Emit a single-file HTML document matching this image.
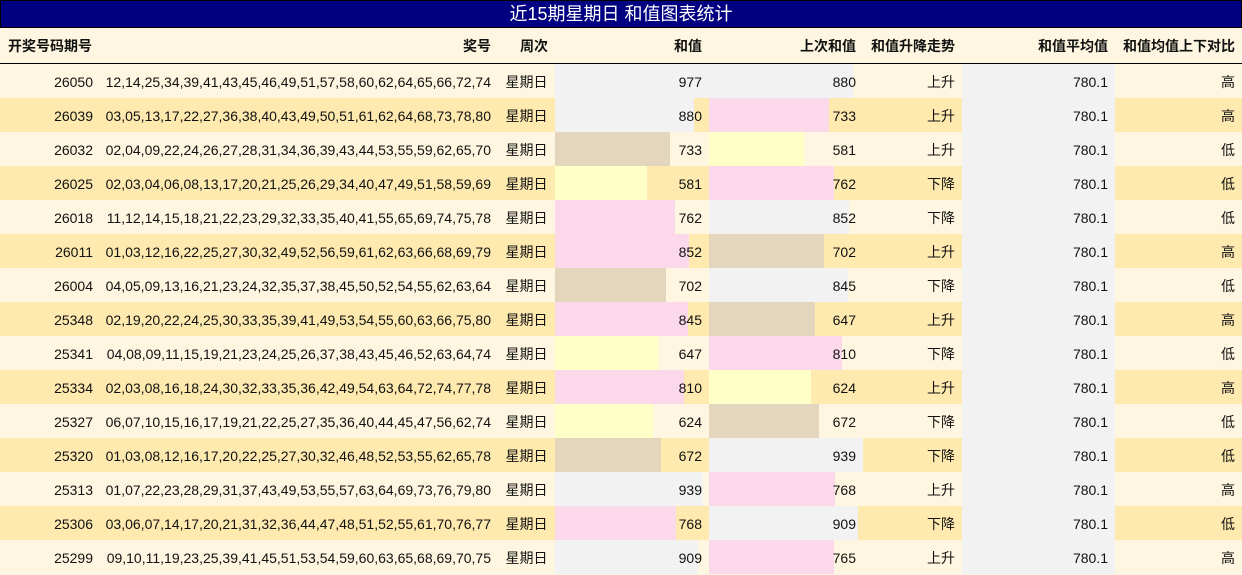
<!DOCTYPE html><html><head><meta charset="utf-8"><style>
body{margin:0;width:1242px;height:575px;overflow:hidden;background:#fef6e0;font-family:"Liberation Sans","Noto Sans CJK SC",sans-serif;font-size:14px;color:#111}
.t{background:#000080;border:1px solid #000;color:#fff;font-size:18px;line-height:27px;text-align:center;box-sizing:border-box;height:28px}
table{border-collapse:collapse;table-layout:fixed;width:1242px}
td,th{padding:1px 7px 0 0;text-align:right;height:33px;white-space:nowrap;position:relative}
th{font-weight:bold;height:34px;border-bottom:1px solid #000;background:#fef6e0}
th:first-child{text-align:left;padding-left:8px}
tr.a td{background:#fef6e0}tr.b td{background:#fee9af}
td.c{text-align:center;padding:1px 0 0 0}
td.g{background:#f2f2f2!important}
.bar{position:absolute;left:0;top:0;height:34px}
span{position:relative}
.G{background:#f2f2f2}.P{background:#fcd9ea}.T{background:#e4d6bc}.Y{background:#ffffc8}
</style></head><body>
<div class="t">近15期星期日 和值图表统计</div>
<table>
<colgroup><col style="width:100px"><col style="width:398px"><col style="width:57px"><col style="width:154px"><col style="width:154px"><col style="width:99px"><col style="width:153px"><col style="width:127px"></colgroup>
<tr><th>开奖号码期号</th><th>奖号</th><th>周次</th><th>和值</th><th>上次和值</th><th>和值升降走势</th><th>和值平均值</th><th>和值均值上下对比</th></tr>
<tr class="a"><td>26050</td><td>12,14,25,34,39,41,43,45,46,49,51,57,58,60,62,64,65,66,72,74</td><td class="c">星期日</td><td><div class="bar G" style="width:154px"></div><span>977</span></td><td><div class="bar G" style="width:144px"></div><span>880</span></td><td>上升</td><td class="g">780.1</td><td>高</td></tr>
<tr class="b"><td>26039</td><td>03,05,13,17,22,27,36,38,40,43,49,50,51,61,62,64,68,73,78,80</td><td class="c">星期日</td><td><div class="bar G" style="width:139px"></div><span>880</span></td><td><div class="bar P" style="width:120px"></div><span>733</span></td><td>上升</td><td class="g">780.1</td><td>高</td></tr>
<tr class="a"><td>26032</td><td>02,04,09,22,24,26,27,28,31,34,36,39,43,44,53,55,59,62,65,70</td><td class="c">星期日</td><td><div class="bar T" style="width:115px"></div><span>733</span></td><td><div class="bar Y" style="width:95px"></div><span>581</span></td><td>上升</td><td class="g">780.1</td><td>低</td></tr>
<tr class="b"><td>26025</td><td>02,03,04,06,08,13,17,20,21,25,26,29,34,40,47,49,51,58,59,69</td><td class="c">星期日</td><td><div class="bar Y" style="width:92px"></div><span>581</span></td><td><div class="bar P" style="width:125px"></div><span>762</span></td><td>下降</td><td class="g">780.1</td><td>低</td></tr>
<tr class="a"><td>26018</td><td>11,12,14,15,18,21,22,23,29,32,33,35,40,41,55,65,69,74,75,78</td><td class="c">星期日</td><td><div class="bar P" style="width:120px"></div><span>762</span></td><td><div class="bar G" style="width:140px"></div><span>852</span></td><td>下降</td><td class="g">780.1</td><td>低</td></tr>
<tr class="b"><td>26011</td><td>01,03,12,16,22,25,27,30,32,49,52,56,59,61,62,63,66,68,69,79</td><td class="c">星期日</td><td><div class="bar P" style="width:134px"></div><span>852</span></td><td><div class="bar T" style="width:115px"></div><span>702</span></td><td>上升</td><td class="g">780.1</td><td>高</td></tr>
<tr class="a"><td>26004</td><td>04,05,09,13,16,21,23,24,32,35,37,38,45,50,52,54,55,62,63,64</td><td class="c">星期日</td><td><div class="bar T" style="width:111px"></div><span>702</span></td><td><div class="bar G" style="width:139px"></div><span>845</span></td><td>下降</td><td class="g">780.1</td><td>低</td></tr>
<tr class="b"><td>25348</td><td>02,19,20,22,24,25,30,33,35,39,41,49,53,54,55,60,63,66,75,80</td><td class="c">星期日</td><td><div class="bar P" style="width:133px"></div><span>845</span></td><td><div class="bar T" style="width:106px"></div><span>647</span></td><td>上升</td><td class="g">780.1</td><td>高</td></tr>
<tr class="a"><td>25341</td><td>04,08,09,11,15,19,21,23,24,25,26,37,38,43,45,46,52,63,64,74</td><td class="c">星期日</td><td><div class="bar Y" style="width:103px"></div><span>647</span></td><td><div class="bar P" style="width:133px"></div><span>810</span></td><td>下降</td><td class="g">780.1</td><td>低</td></tr>
<tr class="b"><td>25334</td><td>02,03,08,16,18,24,30,32,33,35,36,42,49,54,63,64,72,74,77,78</td><td class="c">星期日</td><td><div class="bar P" style="width:129px"></div><span>810</span></td><td><div class="bar Y" style="width:102px"></div><span>624</span></td><td>上升</td><td class="g">780.1</td><td>高</td></tr>
<tr class="a"><td>25327</td><td>06,07,10,15,16,17,19,21,22,25,27,35,36,40,44,45,47,56,62,74</td><td class="c">星期日</td><td><div class="bar Y" style="width:98px"></div><span>624</span></td><td><div class="bar T" style="width:110px"></div><span>672</span></td><td>下降</td><td class="g">780.1</td><td>低</td></tr>
<tr class="b"><td>25320</td><td>01,03,08,12,16,17,20,22,25,27,30,32,46,48,52,53,55,62,65,78</td><td class="c">星期日</td><td><div class="bar T" style="width:106px"></div><span>672</span></td><td><div class="bar G" style="width:154px"></div><span>939</span></td><td>下降</td><td class="g">780.1</td><td>低</td></tr>
<tr class="a"><td>25313</td><td>01,07,22,23,28,29,31,37,43,49,53,55,57,63,64,69,73,76,79,80</td><td class="c">星期日</td><td><div class="bar G" style="width:148px"></div><span>939</span></td><td><div class="bar P" style="width:126px"></div><span>768</span></td><td>上升</td><td class="g">780.1</td><td>高</td></tr>
<tr class="b"><td>25306</td><td>03,06,07,14,17,20,21,31,32,36,44,47,48,51,52,55,61,70,76,77</td><td class="c">星期日</td><td><div class="bar P" style="width:121px"></div><span>768</span></td><td><div class="bar G" style="width:149px"></div><span>909</span></td><td>下降</td><td class="g">780.1</td><td>低</td></tr>
<tr class="a"><td>25299</td><td>09,10,11,19,23,25,39,41,45,51,53,54,59,60,63,65,68,69,70,75</td><td class="c">星期日</td><td><div class="bar G" style="width:143px"></div><span>909</span></td><td><div class="bar P" style="width:125px"></div><span>765</span></td><td>上升</td><td class="g">780.1</td><td>高</td></tr>
</table></body></html>
